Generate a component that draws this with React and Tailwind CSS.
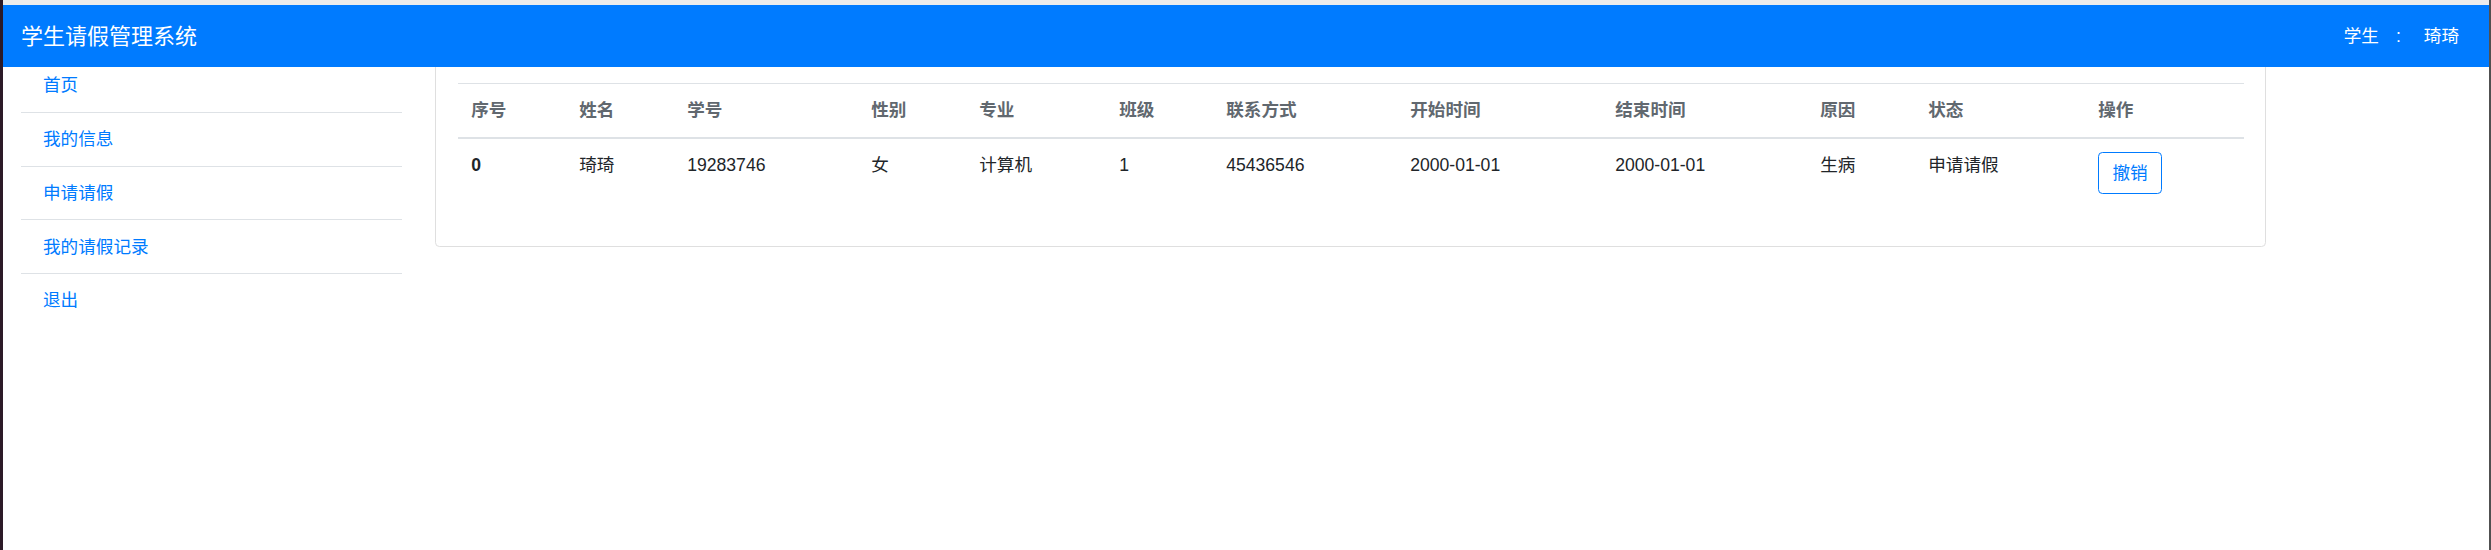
import React from "react";

const font = "font-['Liberation_Sans','Noto_Sans_CJK_SC',sans-serif]";

const menu = ["首页", "我的信息", "申请请假", "我的请假记录", "退出"];

const columns = [
  { title: "序号", w: "w-[108px]" },
  { title: "姓名", w: "w-[108px]" },
  { title: "学号", w: "w-[184px]" },
  { title: "性别", w: "w-[108px]" },
  { title: "专业", w: "w-[140px]" },
  { title: "班级", w: "w-[107px]" },
  { title: "联系方式", w: "w-[184px]" },
  { title: "开始时间", w: "w-[205px]" },
  { title: "结束时间", w: "w-[205px]" },
  { title: "原因", w: "w-[108px]" },
  { title: "状态", w: "w-[170px]" },
  { title: "操作", w: "w-[159px]" },
];

const records = [
  {
    id: 0,
    name: "琦琦",
    sno: "19283746",
    sex: "女",
    major: "计算机",
    clazz: "1",
    phone: "45436546",
    start: "2000-01-01",
    end: "2000-01-01",
    reason: "生病",
    status: "申请请假",
  },
];

const Navbar = () => {
  return (
    <div className="relative z-10 h-[62px] bg-[#007bff] flex items-center pl-[18px] pr-[30px] text-white">
      <span className="text-[22px] leading-[33px]">学生请假管理系统</span>
      <div className="ml-auto flex items-center text-[17.6px]">
        <span>学生</span>
        <span className="ml-[17px]">:</span>
        <span className="ml-[23px]">琦琦</span>
      </div>
    </div>
  );
};

const Sidebar = () => {
  return (
    <ul className="w-[381px] shrink-0">
      {menu.map((item, i) => (
        <li
          key={item}
          className={
            i < menu.length - 1
              ? "py-[13.2px] pl-[22px] border-b border-[#dee2e6]"
              : "py-[13.2px] pl-[22px]"
          }
        >
          <a className="text-[#007bff] text-[17.6px] leading-[26.4px]">{item}</a>
        </li>
      ))}
    </ul>
  );
};

const LeaveTable = () => {
  return (
    <div className="mt-px w-[1831px] border border-[#dfdfdf] rounded-[4.4px] p-[22px]">
      <table className="w-full table-fixed border-collapse mb-[17.6px] text-[17.6px] leading-[26.4px] text-[#212529]">
        <colgroup>
          {columns.map((c) => (
            <col key={c.title} className={c.w} />
          ))}
        </colgroup>
        <thead>
          <tr>
            {columns.map((c) => (
              <th
                key={c.title}
                className="p-[13.2px] text-left align-bottom font-bold text-[#61686f] border-t border-b-2 border-[#dee2e6]"
              >
                {c.title}
              </th>
            ))}
          </tr>
        </thead>
        <tbody>
          {records.map((r) => (
            <tr key={r.id}>
              <th className="p-[13.2px] text-left align-top font-bold border-t border-[#dee2e6]">
                {r.id}
              </th>
              <td className="p-[13.2px] align-top border-t border-[#dee2e6]">{r.name}</td>
              <td className="p-[13.2px] align-top border-t border-[#dee2e6]">{r.sno}</td>
              <td className="p-[13.2px] align-top border-t border-[#dee2e6]">{r.sex}</td>
              <td className="p-[13.2px] align-top border-t border-[#dee2e6]">{r.major}</td>
              <td className="p-[13.2px] align-top border-t border-[#dee2e6]">{r.clazz}</td>
              <td className="p-[13.2px] align-top border-t border-[#dee2e6]">{r.phone}</td>
              <td className="p-[13.2px] align-top border-t border-[#dee2e6]">{r.start}</td>
              <td className="p-[13.2px] align-top border-t border-[#dee2e6]">{r.end}</td>
              <td className="p-[13.2px] align-top border-t border-[#dee2e6]">{r.reason}</td>
              <td className="p-[13.2px] align-top border-t border-[#dee2e6]">{r.status}</td>
              <td className="p-[13.2px] align-top border-t border-[#dee2e6]">
                <button className="border border-[#007bff] text-[#007bff] rounded-[4.4px] px-[13.2px] py-[6.6px] text-[17.6px] leading-[26.4px]">
                  撤销
                </button>
              </td>
            </tr>
          ))}
        </tbody>
      </table>
    </div>
  );
};

const App = () => {
  return (
    <div className={`${font} h-[550px] w-full flex bg-white overflow-hidden`}>
      <div className="w-[3px] shrink-0 bg-[#2c1a27]" />
      <div className="flex-1 flex flex-col min-w-0">
        <div className="h-[5px] bg-[#ececec]" />
        <Navbar />
        <div className="-mt-[8px] flex items-start pl-[18px] gap-[33px]">
          <Sidebar />
          <LeaveTable />
        </div>
      </div>
      <div className="w-[2px] shrink-0 bg-[#505050]" />
    </div>
  );
};

export default App;
